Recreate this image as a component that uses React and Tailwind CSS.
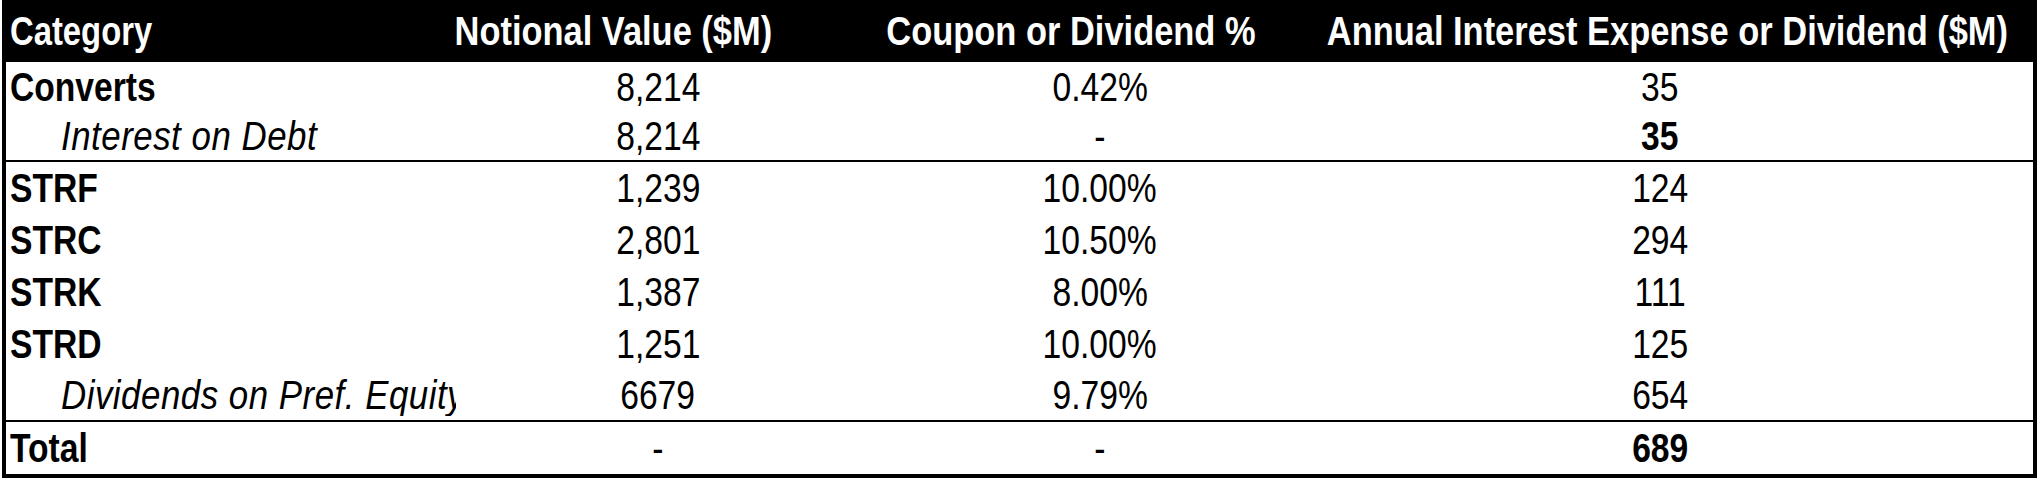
import React from 'react';

const rows = [
  { label: 'Converts', notional: '8,214', rate: '0.42%', annual: '35', kind: 'head', h: 'h-[50px]' },
  { label: 'Interest on Debt', notional: '8,214', rate: '-', annual: '35', kind: 'sub', boldAnnual: true, h: 'h-[50px] border-b-2 border-black' },
  { label: 'STRF', notional: '1,239', rate: '10.00%', annual: '124', kind: 'head', h: 'h-[52px]' },
  { label: 'STRC', notional: '2,801', rate: '10.50%', annual: '294', kind: 'head', h: 'h-[52px]' },
  { label: 'STRK', notional: '1,387', rate: '8.00%', annual: '111', kind: 'head', h: 'h-[52px]' },
  { label: 'STRD', notional: '1,251', rate: '10.00%', annual: '125', kind: 'head', h: 'h-[52px]' },
  { label: 'Dividends on Pref. Equity', notional: '6679', rate: '9.79%', annual: '654', kind: 'sub', h: 'h-[52px] border-b-2 border-black' },
  { label: 'Total', notional: '-', rate: '-', annual: '689', kind: 'head', boldAnnual: true, h: 'h-[52px]' },
];

// narrow look: Liberation Sans squeezed horizontally
const N = ({ children, origin = 'origin-center', sx = 'scale-x-[0.82]' }) => (
  <span className={`inline-block whitespace-nowrap ${sx} ${origin}`}>{children}</span>
);

export default function App() {
  return (
    <div className="w-[2038px] h-[480px] bg-white font-['Liberation_Sans',Arial,sans-serif] text-[41px] text-black">
      <div className="ml-[2px] w-[2035px] border-[4px] border-t-0 border-black">
        {/* HEADER */}
        <div className="grid grid-cols-[446px_320px_484px_752px_1fr] h-[62px] items-center bg-black text-white font-bold leading-none">
          <div className="pl-[4px]"><N origin="origin-left" sx="scale-x-[0.8]">Category</N></div>
          <div className="flex justify-end"><N origin="origin-right" sx="scale-x-[0.84]">Notional Value ($M)</N></div>
          <div className="flex justify-end"><N origin="origin-right" sx="scale-x-[0.84]">Coupon or Dividend %</N></div>
          <div className="flex justify-end"><N origin="origin-right" sx="scale-x-[0.84]">Annual Interest Expense or Dividend ($M)</N></div>
          <div />
        </div>

        {/* BODY */}
        {rows.map((r) => (
          <div
            key={r.label}
            className={`grid grid-cols-[459px_386px_498px_622px_1fr] items-center leading-none ${r.h}`}
          >
            {r.kind === 'sub' ? (
              <div className="w-[450px] pl-[55px] italic tracking-[0.6px] overflow-hidden">
                <N origin="origin-left" sx="scale-x-[0.85]">{r.label}</N>
              </div>
            ) : (
              <div className="pl-[4px] font-bold overflow-hidden">
                <N origin="origin-left">{r.label}</N>
              </div>
            )}
            <div className="text-center"><N>{r.notional}</N></div>
            <div className="text-center"><N>{r.rate}</N></div>
            <div className={r.boldAnnual ? 'text-center font-bold' : 'text-center'}><N>{r.annual}</N></div>
            <div />
          </div>
        ))}
      </div>
    </div>
  );
}
